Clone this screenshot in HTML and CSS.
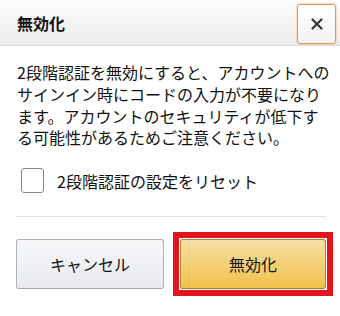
FILE: index.html
```html
<!DOCTYPE html>
<html lang="ja">
<head>
<meta charset="utf-8">
<link rel="stylesheet" href="styles.css">
</head>
<body>
<div class="dialog">
  <header class="header">
    <h1 class="title">無効化</h1>
    <button class="close" aria-label="閉じる">
      <svg width="12" height="12" viewBox="0 0 12 12"><path d="M1.5 1.5L10.5 10.5M10.5 1.5L1.5 10.5" stroke="#333" stroke-width="2.2" stroke-linecap="round"/></svg>
    </button>
  </header>
  <div class="content">
    <p class="message">2段階認証を無効にすると、アカウントへのサインイン時にコードの入力が不要になります。アカウントのセキュリティが低下する可能性があるためご注意ください。</p>
    <label class="check-row">
      <span class="checkbox"></span>
      <span class="check-label">2段階認証の設定をリセット</span>
    </label>
  </div>
  <div class="footer">
    <button class="btn btn-cancel">キャンセル</button>
    <span class="highlight"><button class="btn btn-primary">無効化</button></span>
  </div>
</div>
</body>
</html>
```
FILE: styles.css
```css
html, body {
  margin: 0;
  padding: 0;
  background: #fff;
}
body {
  font-family: "Noto Sans CJK JP", "Noto Sans", sans-serif;
  color: #111;
}
.dialog {
  width: 340px;
  height: 316px;
  overflow: hidden;
}
.header {
  height: 45px;
  border-bottom: 1px solid #dcdcdc;
  background: linear-gradient(#fdfdfd, #ececec);
  display: flex;
  align-items: center;
  justify-content: space-between;
  padding: 0 4px 0 17px;
}
.title {
  margin: 0;
  font-size: 16px;
  font-weight: bold;
  line-height: 20px;
}
.close {
  width: 39px;
  height: 40px;
  margin-top: 2px;
  border: 1px solid #dc9a55;
  border-radius: 3px;
  box-shadow: 0 0 1px 1px rgba(228, 121, 17, 0.2);
  background: linear-gradient(#ffffff, #f3f3f3);
  display: flex;
  align-items: center;
  justify-content: center;
  padding: 0;
}
.content {
  padding: 16px 8px 0 17px;
}
.message {
  margin: 0;
  font-size: 16px;
  line-height: 21.8px;
}
.check-row {
  display: flex;
  align-items: center;
  gap: 13px;
  padding-left: 4px;
  margin-top: 19px;
  height: 25px;
}
.checkbox {
  width: 21px;
  height: 23px;
  border: 1px solid #8a8a8a;
  border-radius: 3px;
  background: #fff;
}
.check-label {
  font-size: 16px;
  line-height: 24px;
}
.footer {
  margin: 23px 14px 0 16px;
  border-top: 1px solid #e3e3e3;
  padding-top: 22px;
  display: flex;
  gap: 16px;
}
.btn {
  flex: 1;
  height: 50px;
  border-radius: 3px;
  font-family: inherit;
  font-size: 16px;
  color: #111;
  padding: 0;
}
.btn-cancel {
  border: 1px solid #adb1b8;
  border-bottom-color: #a2a6ac;
  background: linear-gradient(#f7f8fa, #e7e9ec);
}
.highlight {
  flex: 1;
  display: flex;
  outline: 6px solid #e3141e;
  outline-offset: 1px;
}
.btn-primary {
  border: 1px solid #a88734;
  border-bottom-color: #9c7e31;
  background: linear-gradient(#f7dfa5, #f0c14b);
}
```
